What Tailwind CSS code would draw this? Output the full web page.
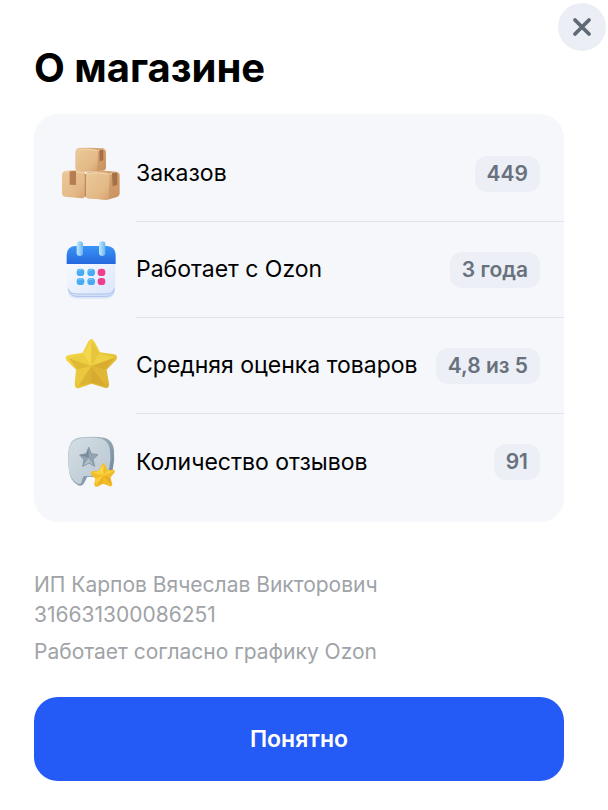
<!DOCTYPE html>
<html lang="ru">

<head>
    <meta charset="UTF-8">
    <meta name="viewport" content="width=device-width, initial-scale=1.0">
    <title>О магазине</title>
    <script src="https://cdn.jsdelivr.net/npm/@tailwindcss/browser@4"></script>
</head>

<body class="bg-white font-['Inter','Roboto',sans-serif] text-black">
    <div class="flex justify-end pt-[3px] pr-0.5">
        <button type="button" aria-label="Закрыть" class="flex size-12 items-center justify-center rounded-full bg-[#ebeff5]">
            <svg class="size-6" viewBox="0 0 24 24" fill="none" stroke="#5f6a77" stroke-width="3.8" stroke-linecap="round">
                <path d="M5 5 19 19M19 5 5 19" />
            </svg>
        </button>
    </div>

    <main class="pl-[34px] pr-11">
        <h1 class="text-[40px] leading-[34px] font-bold">О магазине</h1>

        <dl class="mt-[29px] rounded-3xl bg-[#f5f7fb] py-3">
            <div class="flex items-center gap-3.5 pl-6">
                <!-- boxes -->
                <svg class="size-16 shrink-0" viewBox="24 21 192 192">
                    <defs>
                        <linearGradient id="box" x1="0" y1="0" x2="1" y2="1">
                            <stop offset="0" stop-color="#ecc999" />
                            <stop offset=".7" stop-color="#e3b886" />
                            <stop offset="1" stop-color="#d5a06e" />
                        </linearGradient>
                        <linearGradient id="boxside" x1="0" y1="0" x2="1" y2="1">
                            <stop offset="0" stop-color="#dfb07c" />
                            <stop offset="1" stop-color="#c89060" />
                        </linearGradient>
                    </defs>
                    <path d="M84 40Q110 36 160 40 168 42 168 50V98Q167 106 158 107L86 110Q78 108 77 100V50Q77 42 84 40Z" fill="url(#boxside)" />
                    <path d="M84 42Q112 38 138 44 144 46 144 53L142 102Q141 109 134 109L86 110Q78 108 77 100V51Q77 43 84 42Z" fill="url(#box)" />
                    <path d="M82 44Q112 40 143 47L166 43" fill="none" stroke="#f3d5ab" stroke-width="3" />
                    <path d="M148 46 160 43V76L149 79Z" fill="#a56f47" />
                    <path d="M45 108Q74 103 99 109 106 112 106 119V179Q105 189 96 190L44 185Q36 183 36 174V118Q37 110 45 108Z" fill="url(#box)" />
                    <path d="M113 112Q150 104 198 110 209 112 209 122V176Q208 183 201 186L172 194 113 190Q106 188 106 180V121Q106 114 113 112Z" fill="url(#boxside)" />
                    <path d="M113 113Q145 108 172 114 179 116 179 124L176 187Q175 194 166 194L113 190Q106 188 106 180V121Q106 114 113 113Z" fill="url(#box)" />
                    <path d="M43 111Q72 106 102 114M111 116Q143 110 176 118L205 113" fill="none" stroke="#f3d5ab" stroke-width="3" />
                    <path d="M106 117V185" stroke="#a87348" stroke-width="2.5" />
                    <path d="M59 109 78 108V150L59 149Z" fill="#b57d50" />
                    <path d="M186 115 202 112V149L188 154Z" fill="#a56f47" />
                </svg>
                <div class="flex h-24 grow items-center justify-between gap-3 border-b border-[#dfe2e8] pr-6">
                    <dt class="text-[23px]">Заказов</dt>
                    <dd class="rounded-xl bg-[#eceff6] px-3 text-[21px] leading-9 font-semibold whitespace-nowrap text-[#69717d]">449</dd>
                </div>
            </div>

            <div class="flex items-center gap-3.5 pl-6">
                <!-- calendar -->
                <svg class="size-16 shrink-0" viewBox="24 18 192 192">
                    <defs>
                        <linearGradient id="caltop" x1="0" y1="0" x2="0" y2="1">
                            <stop offset="0" stop-color="#3a94f8" />
                            <stop offset="1" stop-color="#2568de" />
                        </linearGradient>
                        <linearGradient id="page" x1="0" y1="0" x2="1" y2="1">
                            <stop offset="0" stop-color="#f7fbff" />
                            <stop offset="1" stop-color="#dce6fa" />
                        </linearGradient>
                        <linearGradient id="ring" x1="0" y1="0" x2="1" y2="0">
                            <stop offset="0" stop-color="#c2eaff" />
                            <stop offset="1" stop-color="#69b5ee" />
                        </linearGradient>
                    </defs>
                    <rect x="53" y="70" width="142" height="130" rx="25" fill="#dde7f9" />
                    <path d="M57 176Q61 193 80 193H168Q188 193 192 176" fill="none" stroke="#8eabe4" stroke-width="2" />
                    <path d="M52 92H196V162Q194 187 169 187H79Q54 187 52 162Z" fill="url(#page)" />
                    <path d="M55 170Q59 186 79 186H169Q189 186 193 170" fill="none" stroke="#8ba9e5" stroke-width="2" />
                    <path d="M50 96V68Q52 42 77 42H171Q195 43 197 68V96Z" fill="url(#caltop)" />
                    <rect x="80" y="28" width="19" height="44" rx="9.5" fill="url(#ring)" />
                    <rect x="147" y="28" width="19" height="44" rx="9.5" fill="url(#ring)" />
                    <g fill="#48aaf0">
                        <rect x="80" y="110" width="23" height="22" rx="10" />
                        <rect x="112" y="110" width="23" height="22" rx="10" />
                        <rect x="80" y="138" width="23" height="21" rx="10" />
                        <rect x="112" y="138" width="23" height="21" rx="10" />
                    </g>
                    <g fill="#ed3e91">
                        <rect x="143" y="110" width="23" height="22" rx="10" />
                        <rect x="143" y="138" width="23" height="21" rx="10" />
                    </g>
                    <path d="M84 117Q88 112 95 113M116 117Q120 112 127 113M84 144Q88 140 95 141M116 144Q120 140 127 141" fill="none" stroke="#82d3ff" stroke-width="3" stroke-linecap="round" />
                </svg>
                <div class="flex h-24 grow items-center justify-between gap-3 border-b border-[#dfe2e8] pr-6">
                    <dt class="text-[23px]">Работает с Ozon</dt>
                    <dd class="rounded-xl bg-[#eceff6] px-3 text-[21px] leading-9 font-semibold whitespace-nowrap text-[#69717d]">3 года</dd>
                </div>
            </div>

            <div class="flex items-center gap-3.5 pl-6">
                <!-- star -->
                <svg class="size-16 shrink-0" viewBox="24 12 192 192">
                    <defs>
                        <linearGradient id="gold" x1="0" y1="0" x2="1" y2="1">
                            <stop offset="0" stop-color="#f8dc4c" />
                            <stop offset=".55" stop-color="#eac837" />
                            <stop offset="1" stop-color="#d6a62b" />
                        </linearGradient>
                    </defs>
                    <path d="M114 36Q124 18 134 36L150 67 192 73Q206 77 199 89L170 119 177 162Q177 178 164 173L125 161 88 174Q75 178 74 163L78 119 49 91Q42 79 56 75L98 68Z" fill="url(#gold)" />
                    <path d="M124 32V108L100 72Z" fill="#f3d84d" />
                    <path d="M124 32 148 71 124 108Z" fill="#e6c63c" />
                    <path d="M56 84 124 108 81 119Z" fill="#dfb834" />
                    <path d="M56 84 100 72 124 108Z" fill="#ecce43" />
                    <path d="M193 82 124 108 148 71Z" fill="#efd148" />
                    <path d="M193 84 167 119 124 108Z" fill="#d9ae30" />
                    <path d="M81 119 124 108 83 166Z" fill="#eac83f" />
                    <path d="M124 108V158L86 168Z" fill="#dcb234" />
                    <path d="M124 108 167 168 124 158Z" fill="#d6a930" />
                    <path d="M124 108 167 119 170 164Z" fill="#e0b636" />
                </svg>
                <div class="flex h-24 grow items-center justify-between gap-3 border-b border-[#dfe2e8] pr-6">
                    <dt class="text-[23px]">Средняя оценка товаров</dt>
                    <dd class="rounded-xl bg-[#eceff6] px-3 text-[21px] leading-9 font-semibold whitespace-nowrap text-[#69717d]">4,8 из 5</dd>
                </div>
            </div>

            <div class="flex items-center gap-3.5 pl-6">
                <!-- review bubble -->
                <svg class="size-16 shrink-0" viewBox="24 15 192 192">
                    <defs>
                        <linearGradient id="bubble" x1="0" y1="0" x2="1" y2="1">
                            <stop offset="0" stop-color="#d3dde4" />
                            <stop offset="1" stop-color="#b9c7d1" />
                        </linearGradient>
                        <linearGradient id="edge" x1="0" y1="0" x2="1" y2="1">
                            <stop offset="0" stop-color="#b9c8d3" />
                            <stop offset="1" stop-color="#687f92" />
                        </linearGradient>
                    </defs>
                    <path d="M93 37Q135 33 166 39 189 46 192 76 195 105 188 134 181 156 158 157L112 155 101 176Q93 186 82 179 60 167 57 137 52 98 56 72 62 40 93 37Z" fill="url(#edge)" />
                    <path d="M92 40Q130 35 154 41 176 48 180 75 184 103 178 130 172 150 151 152L104 153Q99 154 98 159L94 173Q89 181 80 174 60 162 57 135 53 98 57 74 63 44 92 40Z" fill="url(#bubble)" />
                    <path d="M116 67 124 86 144 89 129 103 134 124 117 114 98 124 102 104 89 90 109 86Z" fill="#93a3b0" stroke="#8496a5" stroke-width="3" stroke-linejoin="round" />
                    <path d="M116 69V98L109 87ZM91 91 109 87 116 98Z" fill="#768a9a" />
                    <path d="M117 100V113L100 121Z" fill="#b5c2cc" />
                    <path d="M117 100 132 121 117 113Z" fill="#a9b7c2" />
                    <path d="M155 119Q160 110 165 120L173 135 190 134Q198 137 192 145L181 158 187 177Q186 187 177 183L160 176 142 185Q133 187 133 177L136 161 124 149Q120 140 129 138L146 137Z" fill="#f2bd27" />
                    <path d="M160 118V152L147 138Z" fill="#fbd848" />
                    <path d="M127 143 147 138 160 152Z" fill="#f9cf3b" />
                    <path d="M192 139 160 152 173 136Z" fill="#f8ce41" />
                    <path d="M160 152 181 158 184 180Z" fill="#e9ac22" />
                    <path d="M136 161 160 152 138 180Z" fill="#fbcd38" />
                    <path d="M160 152V175L140 181Z" fill="#edb124" />
                </svg>
                <div class="flex h-24 grow items-center justify-between gap-3 pr-6">
                    <dt class="text-[23px]">Количество отзывов</dt>
                    <dd class="rounded-xl bg-[#eceff6] px-3 text-[21px] leading-9 font-semibold whitespace-nowrap text-[#69717d]">91</dd>
                </div>
            </div>
        </dl>

        <div class="mt-12 space-y-[7px] text-[21px] leading-[30px] text-[#a0a3a7]">
            <p>ИП Карпов Вячеслав Викторович<br>316631300086251</p>
            <p>Работает согласно графику Ozon</p>
        </div>

        <button type="button" class="mt-[30px] mb-7 h-[84px] w-full rounded-3xl bg-[#245af5] text-[23px] font-semibold text-white">Понятно</button>
    </main>
</body>

</html>
